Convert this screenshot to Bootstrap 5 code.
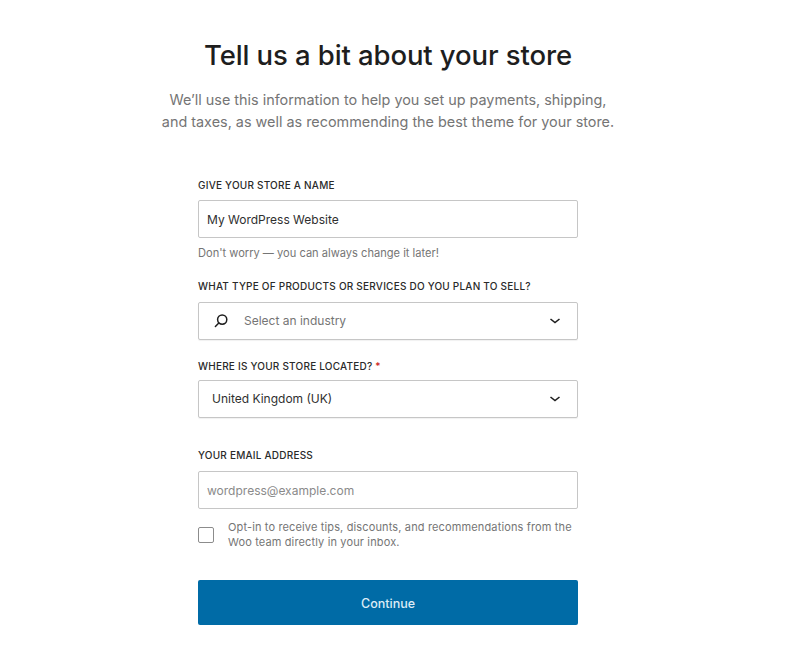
<!DOCTYPE html>
<html lang="en">
<head>
<meta charset="utf-8">
<title>Tell us a bit about your store</title>
<link href="https://cdn.jsdelivr.net/npm/bootstrap@5.3.0/dist/css/bootstrap.min.css" rel="stylesheet">
<style>
html, body { background: #fff; }
body { font-family: Inter, "Liberation Sans", sans-serif; overflow: hidden; }
.store-page { width: 776px; height: 657px; padding-top: 37px; }
.store-title { font-size: 27.5px; line-height: 36px; font-weight: 500; color: #1e1e1e; margin: 0 0 16px; letter-spacing: -.1px; }
.store-sub { font-size: 14.4px; line-height: 22px; color: #757575; margin: 0 0 45px; }
.store-form { width: 380px; }
.store-label { display: block; font-size: 10px; line-height: 14px; font-weight: 500; color: #2a2a2a; text-transform: uppercase; letter-spacing: .22px; margin: 0 0 8px; }
.store-label-b { margin-bottom: 9px; }
.store-label-c { margin-bottom: 7px; }
.store-label-d { margin-bottom: 9px; }
.store-req { color: #cc1818; }
.store-input { height: 38px; border: 1px solid #c6c6c6; border-radius: 2px; font-size: 12px; padding: 0 8px; color: #2f2f2f; box-shadow: none; }
.store-input::placeholder { color: #8a8a8a; opacity: 1; }
.store-help { font-size: 11.1px; line-height: 14px; color: #757575; margin: 8px 0 19px; }
.store-select { height: 38px; border: 1px solid #c6c6c6; border-radius: 2px; font-size: 12px; color: #2f2f2f; background: #fff; box-shadow: 0 1px 1px rgba(0,0,0,.06); }
.store-select-a { padding: 0 16px 0 14px; margin-bottom: 19px; }
.store-select-b { padding: 0 16px 0 13px; margin-bottom: 30px; }
.store-ph { color: #757575; margin-left: 15px; flex-grow: 1; }
.form-check-input[type=checkbox].store-check { width: 16px; height: 16px; border: 1px solid #8c8c8c; border-radius: 2px; margin: 0 14px 0 0; flex: none; background-color: #fff; }
.store-check-row { margin: 11px 0 30px; }
.store-check-text { font-size: 11px; line-height: 15px; color: #757575; letter-spacing: .14px; margin: 0; }
.store-btn { height: 45px; padding-top: 10px; background: #006ba6; border: 0; border-radius: 2px; color: #dcecf6; font-size: 12.5px; font-weight: 500; }
.store-btn:hover { background: #006ba6; color: #dcecf6; }
</style>
</head>
<body>
<main class="store-page d-flex flex-column align-items-center text-center">
  <h1 class="store-title">Tell us a bit about your store</h1>
  <p class="store-sub">We’ll use this information to help you set up payments, shipping,<br>and taxes, as well as recommending the best theme for your store.</p>
  <form class="store-form text-start">
    <label class="store-label" for="storeName">Give your store a name</label>
    <input id="storeName" class="form-control store-input" type="text" value="My WordPress Website">
    <p class="store-help">Don't worry — you can always change it later!</p>

    <label class="store-label store-label-b">What type of products or services do you plan to sell?</label>
    <div class="store-select store-select-a d-flex align-items-center">
      <svg width="16" height="16" viewBox="0 0 16 16" fill="none" stroke="#1e1e1e" stroke-width="1.5" stroke-linecap="round" aria-hidden="true"><circle cx="9.2" cy="6.6" r="4.6"/><path d="M5.8 9.9 2.4 13.4"/></svg>
      <span class="store-ph">Select an industry</span>
      <svg width="12" height="8" viewBox="0 0 12 8" fill="none" stroke="#1e1e1e" stroke-width="1.6" aria-hidden="true"><path d="M1.5 2 6 5.6 10.5 2"/></svg>
    </div>

    <label class="store-label store-label-c">Where is your store located? <span class="store-req">*</span></label>
    <div class="store-select store-select-b d-flex align-items-center justify-content-between">
      <span>United Kingdom (UK)</span>
      <svg width="12" height="8" viewBox="0 0 12 8" fill="none" stroke="#1e1e1e" stroke-width="1.6" aria-hidden="true"><path d="M1.5 2 6 5.6 10.5 2"/></svg>
    </div>

    <label class="store-label store-label-d" for="storeEmail">Your email address</label>
    <input id="storeEmail" class="form-control store-input" type="email" placeholder="wordpress@example.com">

    <div class="store-check-row d-flex align-items-center">
      <input id="optIn" class="form-check-input store-check" type="checkbox">
      <label class="store-check-text" for="optIn">Opt-in to receive tips, discounts, and recommendations from the Woo team directly in your inbox.</label>
    </div>

    <button type="button" class="btn store-btn w-100">Continue</button>
  </form>
</main>
<script src="https://cdn.jsdelivr.net/npm/bootstrap@5.3.0/dist/js/bootstrap.bundle.min.js"></script>
</body>
</html>
